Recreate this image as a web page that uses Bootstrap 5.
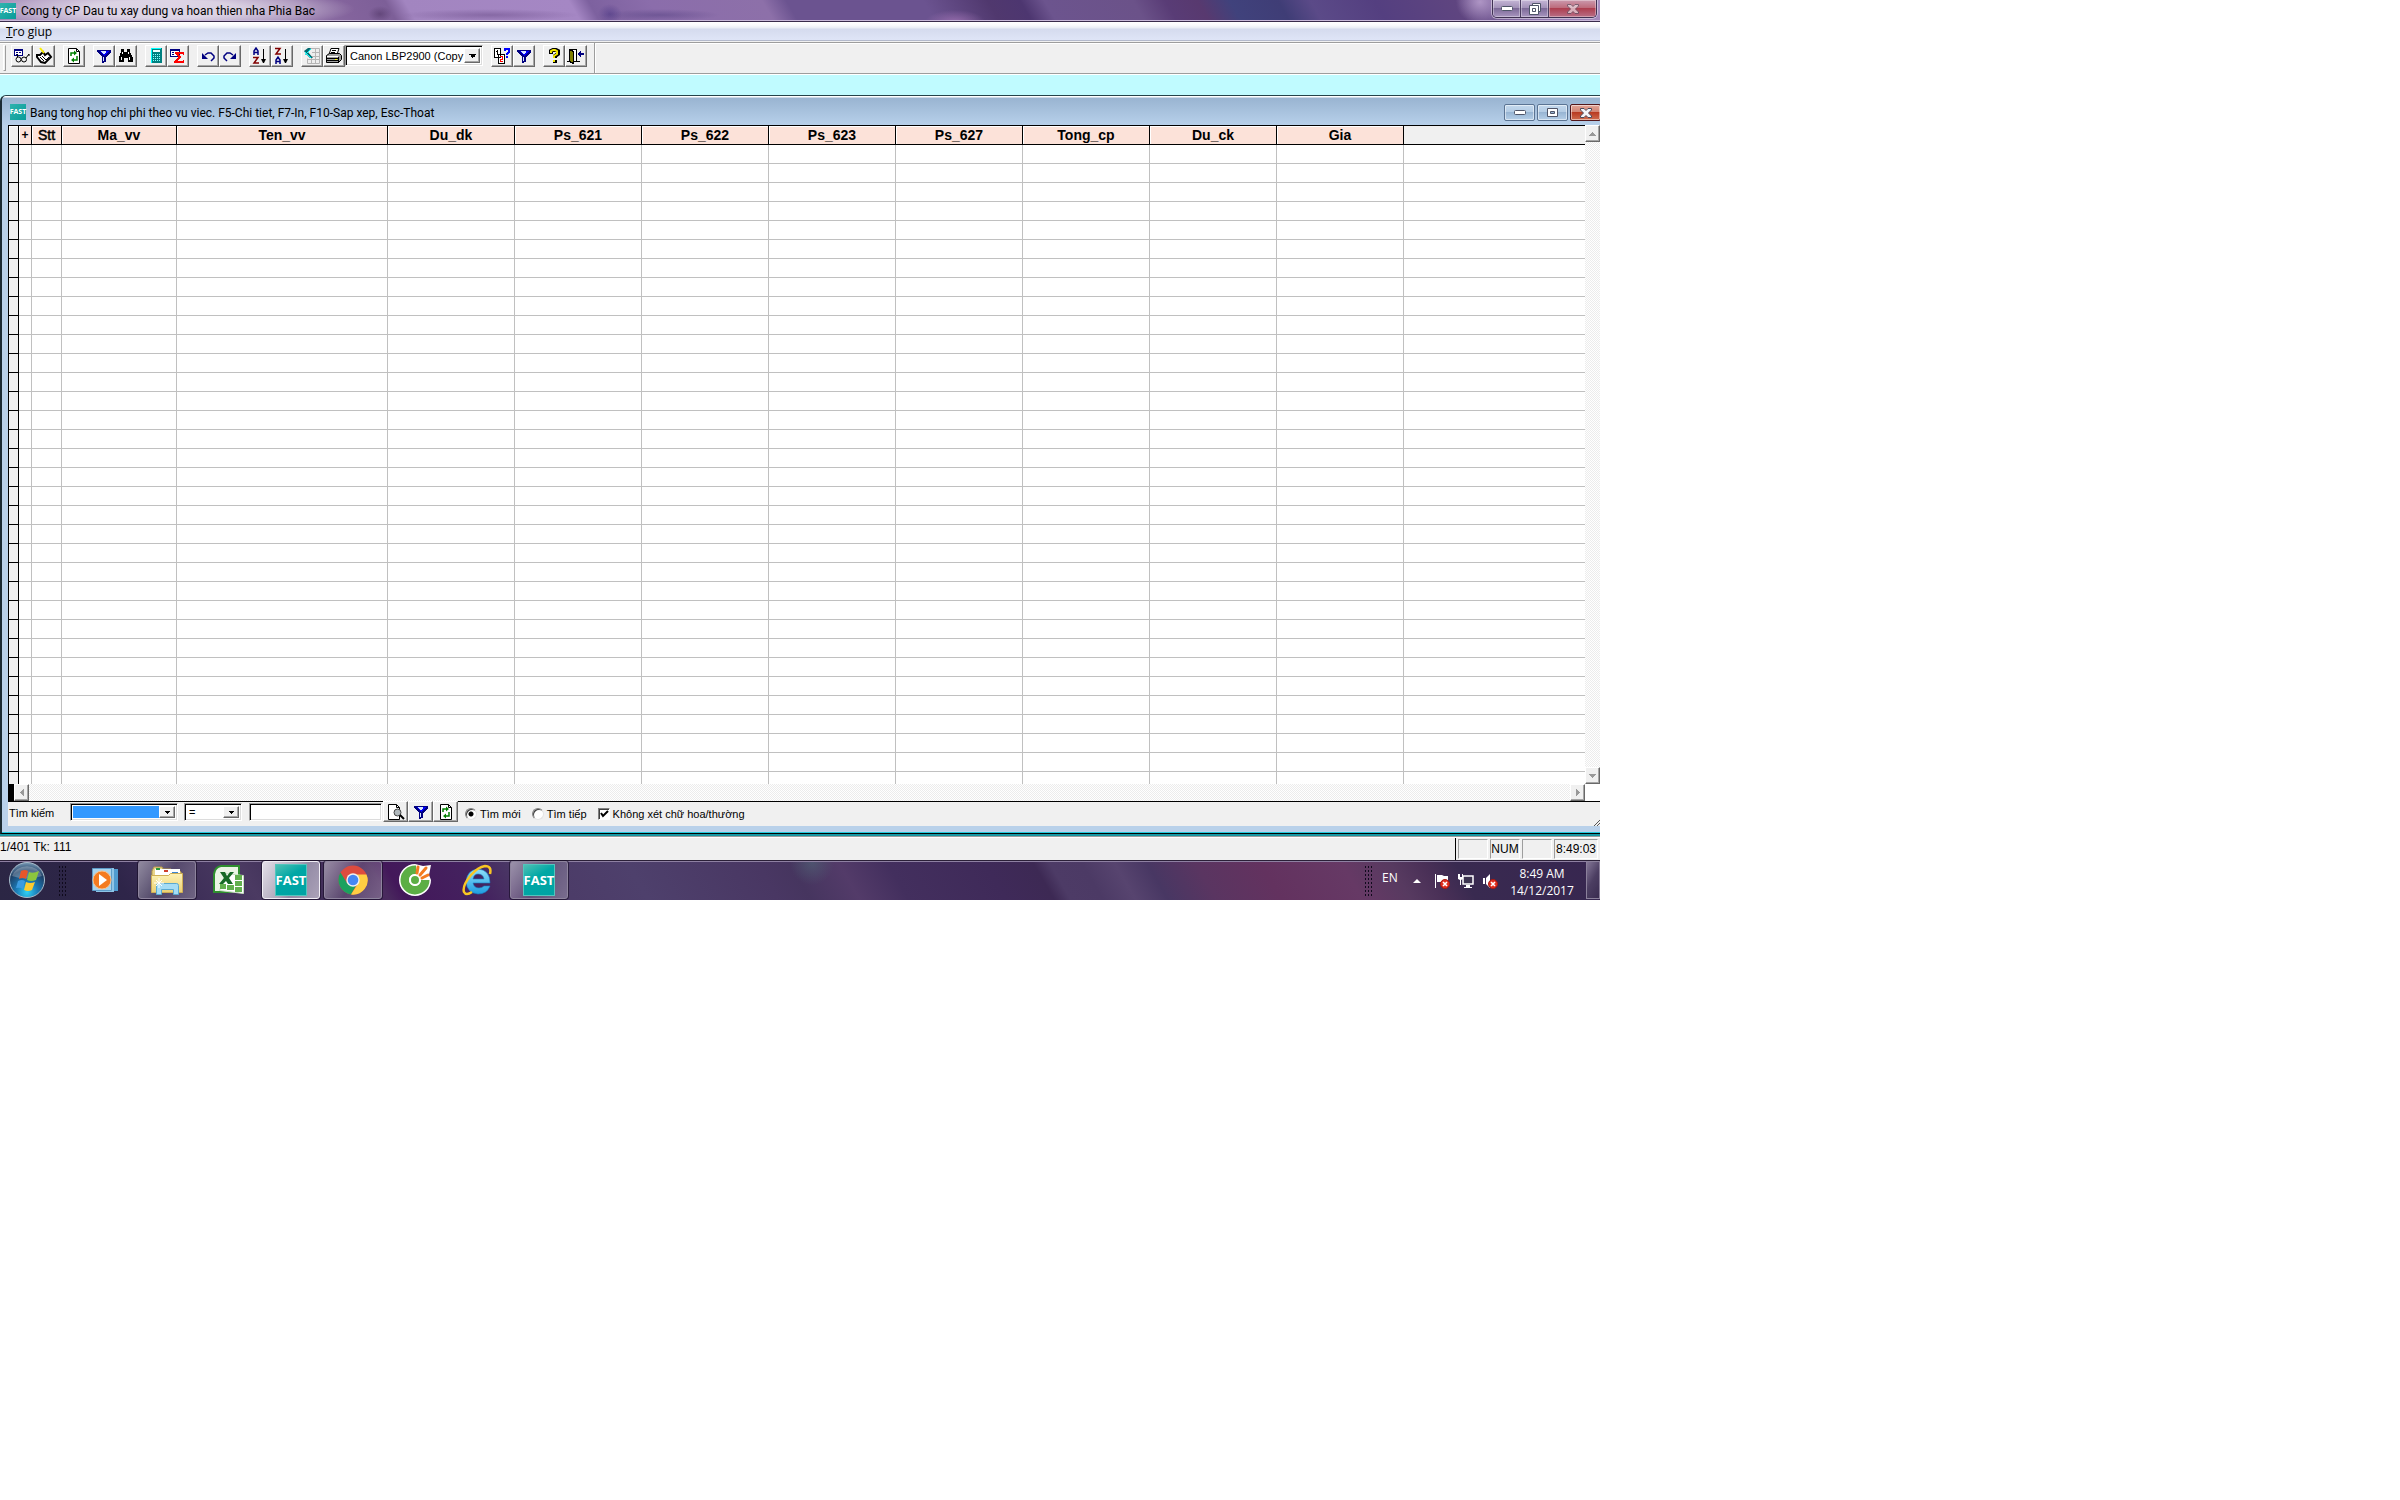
<!DOCTYPE html>
<html lang="vi">
<head>
<meta charset="utf-8">
<meta name="viewport" content="width=device-width, initial-scale=1">
<title>Cong ty CP Dau tu xay dung va hoan thien nha Phia Bac</title>
<link href="https://cdn.jsdelivr.net/npm/bootstrap@5.3.0/dist/css/bootstrap.min.css" rel="stylesheet">
<style>
  :root { --face:#f0f0f0; --frame:#b9d1ea; }
  body { background:#fff; color:#000; font-family:"Liberation Sans",Arial,sans-serif; font-size:12px; line-height:16px; }
  button, input, select { font:inherit; color:inherit; border-radius:0; padding:0; margin:0; }
  svg { display:block; flex:none; }
  .pix { shape-rendering:crispEdges; }
  .desktop { max-width:1600px; overflow:hidden; }
  .segoe { font-family:"Open Sans","Noto Sans",sans-serif; font-size:12px; }
  .caption-font { font-family:Roboto,"Open Sans",sans-serif; font-size:12px; }

  /* application title bar */
  .app-title { height:22px; border-bottom:1px solid #3a2c4c; box-shadow:inset 0 -1px #c9b9d9;
    background:
      radial-gradient(ellipse 190px 22px at 165px 9px, rgba(255,255,255,.62) 40%, rgba(255,255,255,.3) 75%, transparent),
      radial-gradient(ellipse 90px 6px at 490px 15px, rgba(80,50,110,.35), transparent),
      radial-gradient(ellipse 60px 6px at 660px 15px, rgba(60,45,110,.35), transparent),
      radial-gradient(ellipse 12px 10px at 610px 14px, rgba(70,50,130,.5), transparent),
      radial-gradient(ellipse 12px 8px at 380px 14px, rgba(60,35,80,.4), transparent),
      radial-gradient(ellipse 30px 12px at 955px 22px, rgba(160,115,180,.8), transparent),
      radial-gradient(ellipse 24px 22px at 1480px 2px, rgba(190,165,210,.8), transparent),
      linear-gradient(60deg,#9f86b4 0,#a68fbc 12%,#83639c 22%,#7d5f98 24.6%,#a285c0 25.8%,#a587c4 36%,#7d619f 37.2%,#8b6dab 41%,#8d70a9 48%,#6b5390 49.5%,#6b5390 58%,#50386e 62%,#4d3670 64%,#6c548e 65.5%,#6b5289 71%,#593c76 73%,#58396f 75%,#40427c 77%,#3f3d76 80%,#5b4a88 82%,#543f80 86%,#5f4580 91%,#8e74ac 95%,#a78fc0 100%); }
  .app-title .fast-tag { margin-top:3px; }
  .app-name { line-height:22px; margin-left:5px; }
  .fast-tag { background:linear-gradient(135deg,#2fb3ae,#089c99); color:#fff; font-family:"Open Sans",sans-serif; font-weight:700; display:inline-flex; align-items:center; justify-content:center; flex:none; }
  .fast-tag.s16 { width:16px; height:16px; font-size:7px; line-height:16px; }
  .fast-tag.s32 { width:32px; height:32px; font-size:13px; line-height:32px; background:linear-gradient(150deg,#4fc0b4,#00a7a5 40%,#00a3a4); border:1px solid #53c5bd; }
  .caption-set { align-self:flex-start; border:1px solid #3f3152; border-top:0; border-radius:0 0 5px 5px; box-shadow:0 0 0 1px rgba(255,255,255,.45); overflow:hidden; margin-right:3px; }
  .caption-set button { width:28px; height:17px; border:0; border-right:1px solid #4b3d60; background:linear-gradient(#c5b6d6,#a392b9 45%,#7d6a98 50%,#a895bf); display:flex; align-items:center; justify-content:center; box-shadow:inset 0 0 0 1px rgba(255,255,255,.35); }
  .caption-set button:last-child { width:47px; border-right:0; background:linear-gradient(#cb9aae,#bd6c7c 45%,#ad3f50 50%,#b86e86); }

  /* menu and toolbar */
  .menu-strip { height:20px; padding:0 6px; background:linear-gradient(#fff 0,#fbfbfd 3px,#e9edf5 6px,#d5dbee 7px,#dfe5f7 18px,#b3b9cb 18px,#b3b9cb 19px,var(--face) 19px); }
  .menu-strip a { color:#000; text-decoration:none; line-height:20px; }
  .tool-strip { height:32px; background:var(--face); border-top:1px solid #9d9d9d; border-bottom:1px solid #9d9d9d; box-shadow:inset 0 1px #fff; }
  .tool-box { padding:2px 7px 0 3px; border-right:1px solid #9d9d9d; box-shadow:inset 0 1px #fff, 1px 0 #fff; gap:8px; align-items:flex-start; }
  .tool-grip { width:3px; height:26px; border:1px solid; border-color:#fff #9d9d9d #9d9d9d #fff; margin-right:-3px; }
  .tool-btn { width:22px; height:22px; background:#f0f0f0; border:1px solid; border-color:#fff #696969 #696969 #fff; box-shadow:inset -1px -1px #a6a6a6; display:flex; align-items:center; justify-content:center; }
  .sunken { background:#fff; border:1px solid; border-color:#9d9d9d #fff #fff #9d9d9d; box-shadow:inset 1px 1px #000,inset -1px -1px #dcdcdc; }
  .combo { position:relative; display:flex; font-size:11px; }
  .combo select { width:100%; height:100%; appearance:none; border:0; background:transparent; padding:0 18px 0 4px; outline:0; }
  .combo .drop { position:absolute; right:2px; top:2px; bottom:2px; width:16px; background:#f0f0f0; border:1px solid; border-color:#fff #696969 #696969 #fff; box-shadow:inset -1px -1px #a6a6a6; display:flex; align-items:center; justify-content:center; pointer-events:none; }
  .combo-printer { width:138px; height:21px; }

  /* child window */
  .mdi { background:#c0fbff; padding-top:20px; border-top:1px solid #fff; }
  .child { background:var(--frame); border-left:2px solid #1c2b33; border-top:1px solid #24434a; border-top-left-radius:6px; border-bottom:1px solid #000; box-shadow:inset 0 1px #fff, inset 0 -1px #23c9dd; padding:0 0 7px 6px; }
  .child-title { height:29px; margin-left:-6px; padding:8px 0 0 8px; background:linear-gradient(#fff 0,#fff 1px,#99b4d1 2px,#b7d0ea); border-top-left-radius:5px; }
  .child-name { line-height:18px; margin-left:4px; }
  .child-caps { gap:2px; }
  .child-title button { width:31px; height:17px; border:1px solid #5b7493; border-radius:2px; background:linear-gradient(#c4d9ee,#b4cce4 45%,#98b5d3 50%,#b5cfe8); box-shadow:inset 0 0 0 1px rgba(255,255,255,.5); display:flex; align-items:center; justify-content:center; }
  .child-title button.x-btn { border-color:#52171b; background:linear-gradient(#e3a497,#d28573 45%,#b93b22 50%,#cf6c4e); margin-right:-1px; }
  .cost-grid { table-layout:fixed; border-collapse:separate; border-spacing:0; width:100%; background:#fff; border-top:1px solid #000; }
  .cost-grid th, .cost-grid td { padding:0; border-right:1px solid #c0c0c0; border-bottom:1px solid #c0c0c0; height:19px; }
  .cost-grid th { background:#fce2d9; border-color:#000; box-shadow:inset 1px 1px #fff; font-size:14px; line-height:18px; text-align:center; overflow:hidden; }
  .cost-grid th:nth-child(2) { font-size:12px; }
  .cost-grid th:nth-child(3) { font-weight:400; -webkit-text-stroke:.5px #000; }
  .cost-grid tr > :first-child { background:var(--face); border-color:#000; border-left:1px solid #000; }
  .cost-grid th:last-child { background:var(--face); box-shadow:none; }
  .cost-grid tr > :last-child { border-right:0; }
  .cost-grid tr.cut td { height:12px; border-bottom:0; }
  .track { background:repeating-conic-gradient(#fff 0 25%,#ececec 0 50%) 0 0/2px 2px; }
  .vbar { width:15px; }
  .hbar { height:17px; }
  .hbar .corner-l { width:6px; }
  .hbar .corner-r { width:15px; }
  .arrow { width:15px; height:17px; background:#f0f0f0; border:1px solid; border-color:#fff #696969 #696969 #fff; box-shadow:inset -1px -1px #a6a6a6; display:flex; align-items:center; justify-content:center; }
  .find-strip { background:var(--face); border-top:1px solid #000; height:25px; align-items:flex-start; padding-left:1px; font-size:11px; }
  .find-strip label { line-height:16px; }
  .find-strip .find-label { width:61px; margin-top:3px; }
  .find-field { width:108px; height:18px; margin:1px 6px 0 0; }
  .combo.find-field select { background:#3399ff; background-clip:content-box; padding:2px 18px 2px 2px; }
  .find-op { width:58px; height:18px; margin:1px 7px 0 0; }
  .find-text { width:133px; height:18px; margin:1px 1px 0 0; padding:0 4px; }
  .find-btn { width:25px; height:21px; margin-top:-1px; }
  .choice { display:flex; align-items:center; gap:3px; margin:4px 11px 0 0; }
  .choice.first { margin-left:7px; }
  .old-radio { appearance:none; width:12px; height:12px; border-radius:50%; background:#fff; border:1px solid; border-color:#808080 #e3e3e3 #e3e3e3 #808080; box-shadow:inset 1px 1px #404040; flex:none; }
  .old-radio:checked { background:radial-gradient(circle,#000 2px,#fff 3px); }
  .old-check { appearance:none; width:12px; height:12px; background:#fff; border:1px solid; border-color:#808080 #fff #fff #808080; box-shadow:inset 1px 1px #404040; flex:none; }
  .old-check:checked { background:#fff url("data:image/svg+xml,%3Csvg xmlns='http://www.w3.org/2000/svg' viewBox='0 0 10 10'%3E%3Cpath fill='none' stroke='%23000' stroke-width='2' d='M2 4l2 3 5-5'/%3E%3C/svg%3E"); }
  .teal-gap { height:4px; background:linear-gradient(#1797a3 0 2px,#9d9d9d 2px 3px,#fff 3px); }

  /* status bar */
  .status-strip { height:22px; background:var(--face); padding:1px 2px 0 0; gap:2px; }
  .status-strip .cell-box { width:30px; height:20px; border:1px solid; border-color:#9d9d9d #fff #fff #9d9d9d; text-align:center; line-height:18px; }
  .status-strip .cell-box.time { width:44px; }
  .status-rule { width:1px; height:22px; background:#000; margin-top:-1px; }

  /* taskbar */
  .taskbar { height:40px; border-top:1px solid #2b2038; box-shadow:inset 0 1px #8e80a2; color:#fff;
    background:
      radial-gradient(ellipse 22px 22px at 812px 2px,rgba(80,105,120,.55),transparent),
      linear-gradient(60deg,#2b2644 0,#2e2549 8%,#3a2c55 11%,#4b3a62 16%,#3f3058 19%,#4a2a5e 24%,#43185a 25%,#44225f 30%,#4b3a66 33%,#4e406c 40%,#493763 48%,#46355f 50%,#533b69 53%,#432f5e 56%,#3f2a59 62%,#3d2954 65%,#4d3b66 66%,#4c3a65 68%,#57446f 70%,#483763 72%,#5a3561 75%,#63325f 79%,#663965 84%,#573a60 87%,#4a3057 89%,#392a50 91%,#372650 100%); }
  .task-slot { width:58px; height:38px; border:1px solid transparent; border-radius:3px; background:transparent; display:flex; align-items:center; justify-content:center; }
  .task-slot.open { border-color:#8e849d; background:linear-gradient(120deg,rgba(255,255,255,.45),rgba(255,255,255,.12) 50%,rgba(255,255,255,.25)); box-shadow:0 0 0 1px rgba(20,10,35,.6); }
  .task-slot.front { background:linear-gradient(120deg,#e3dfe8,#b0a8bb 45%,#938aa5 60%,#aba2b8); border-color:#f1eef5; }
  .dots { width:8px; height:31px; background:radial-gradient(circle,#0f0a1c 1px,transparent 1px) 0 0/3px 4px; }
  .orb-btn { margin-left:8px; }
  .start-dots { margin:4px 10px 0 12px; }
  .tray-dots { margin:4px 10px 0 0; }
  .tray-lang { width:21px; margin-top:9px; }
  .tray-up { margin:18px 13px 0 10px; }
  .tray-icons { gap:8px; margin-top:12px; }
  .clock { width:88px; margin-top:4px; line-height:17px; text-align:center; }
  .peek { width:14px; height:38px; border:1px solid #8b809b; background:linear-gradient(120deg,#837696,#4c3e62 50%,#3a2c50); }
</style>
</head>
<body>
<svg width="0" height="0" class="position-absolute" aria-hidden="true">
  <defs>
    <symbol id="i-view" viewBox="0 0 18 18"><path fill="#000080" d="M1 2h9v7H1z"/><path fill="#fff" d="M2 4h7v4H2z"/><path fill="#000080" d="M3 5h2v1H3zM6 5h2v1H6zM3 7h2v1H3z"/><g fill="none" stroke="#000" stroke-width="1"><circle cx="5.500" cy="12.500" r="2.500"/><circle cx="11" cy="12.500" r="2.500"/><path d="M4.500 10V7M13 11l3-4v2"/></g></symbol>
    <symbol id="i-edit" viewBox="0 0 18 18"><path fill="#fff" stroke="#000" stroke-width="2" d="M2 8h3l3-3 2 3 3-2 3 4-6 6-4-1-4-5z"/><path stroke="#000" d="M5 10l4 4M7 9l4 4M11 13l3-3" fill="none"/><path stroke="#f8ee00" stroke-width="2" d="M5 1l4 5"/></symbol>
    <symbol id="i-refresh" viewBox="0 0 18 18"><path fill="#fff" stroke="#000" d="M3.500 1.500h8l3 3v12h-11z"/><path fill="none" stroke="#000" d="M11.500 1.500v3h3"/><path fill="none" stroke="#008000" stroke-width="1.500" d="M6 9V6h3M12 9v4H9"/><path fill="#008000" d="M9 3.500l3 2.500-3 2.500zM9 10.500v5l-3-2.500z"/></symbol>
    <symbol id="i-filter" viewBox="0 0 18 18"><path d="M2 3h14v2l-5 5v5l-4 1v-6L2 5z" fill="#000080"/><path fill="#00f" d="M4 4h10l-5 5z"/><path fill="#d8e8ff" d="M6 4h5v1l-2 3-2-2zM8 10h1v4H8z"/></symbol>
    <symbol id="i-find" viewBox="0 0 18 18"><path d="M4 2h3v3h3V2h3v3l3 6v4h-5v-4H7v4H2v-4l2-6z"/><path fill="#fff" d="M5 5h1v2H5zM11 5h1v2h-1zM4 10h1v3H4zM12 10h1v3h-1z"/></symbol>
    <symbol id="i-calc" viewBox="0 0 18 18"><path fill="#008080" d="M4 1h11v15H4z"/><path fill="#0ff" d="M4 1h10v1H5v14H4z"/><path fill="#eff" d="M6 3h7v2H6z"/><path fill="#8ff" d="M6 7h1v1H6zM8 7h1v1H8zM10 7h1v1h-1zM12 7h1v1h-1zM6 9h1v1H6zM8 9h1v1H8zM10 9h1v1h-1zM12 9h1v1h-1zM6 11h1v1H6zM8 11h1v1H8zM10 11h1v1h-1zM12 11h1v1h-1zM6 13h1v1H6zM8 13h1v1H8zM10 13h1v1h-1zM12 13h1v1h-1z"/></symbol>
    <symbol id="i-sum" viewBox="0 0 18 18"><path fill="#000080" d="M1 2h10v8H1z"/><path fill="#fff" d="M2 4h8v5H2z"/><path fill="#000080" d="M3 5h2v1H3zM6 5h3v1H6zM3 7h2v1H3z"/><path fill="#f00" d="M6 5h9v3h-1l-1-1H9l3 3-4 4h5l2-2v4H5v-2l4-4-3-3z"/></symbol>
    <symbol id="i-undo" viewBox="0 0 18 18"><path fill="none" stroke="#000080" stroke-width="1.500" d="M6 8l3-2h3l3 3v2l-3 3"/><path fill="#000080" d="M3 6v6h6z"/></symbol>
    <symbol id="i-redo" viewBox="0 0 18 18"><path fill="none" stroke="#000080" stroke-width="1.500" d="M12 8L9 6H6L3 9v2l3 3"/><path fill="#000080" d="M15 6v6H9z"/></symbol>
    <symbol id="i-excel" viewBox="0 0 18 18"><path fill="#eee" stroke="#b5b5b5" d="M7.500 1.500h9v15h-12v-5"/><path stroke="#b5b5b5" fill="none" d="M9 5.500h8M8 9.500h9M5 12.500h12M12.500 2v15M8.500 10v7"/><path fill="#006a70" d="M1 4l4-3h3L5 5l5 6H7L3 7z"/><path stroke="#0ff" d="M2 8l6-6M2 5l6 6" fill="none"/></symbol>
    <symbol id="i-print" viewBox="0 0 18 18"><path fill="#fff" stroke="#000" d="M6 1.500h8l-2 6H4z"/><path stroke="#000" d="M7 3.500h4M6 5.500h4" fill="none"/><path fill="#a0a0a0" stroke="#000" d="M1.500 8.500l3-2h10l2 2v4l-3 3h-12z"/><path fill="#fff" d="M2 9h11v1H2z"/><path fill="#ff0" d="M10 12h2v1h-2z"/><path stroke="#000" d="M2 11.500h11M2 13.500h11M13.500 10v6" fill="none"/></symbol>
    <symbol id="i-pages" viewBox="0 0 18 18"><path fill="#fff" stroke="#000" d="M1.500 1.500h6v9h-6zM5.500 7.500h6v9h-6z"/><path fill="#000" d="M4 3h1v5H4zM3 4h1v1H3z"/><path fill="none" stroke="red" d="M7 9.500h2.500V12H7.500v2.500H10"/><path fill="none" stroke="#00f" stroke-width="2" d="M12 4V2h4v3l-2 2v1M14 9v2"/></symbol>
    <symbol id="i-help" viewBox="0 0 18 18"><path fill="none" stroke="#000" stroke-width="4" d="M6 7V4l2-1h3l2 1v3l-3 2v2M10 13v3"/><path fill="none" stroke="#f2e600" stroke-width="2" d="M6 6V4l2-1h2l2 1v3l-3 2v2M9 13v2"/></symbol>
    <symbol id="i-exit" viewBox="0 0 18 18"><path fill="#fff" stroke="#000" d="M2.500 2.500h7v12h-7z"/><path fill="#808000" stroke="#000" d="M2.500 2.500l4 2v12l-4-2z"/><path stroke="#000" d="M0 14.500h3M9 14.500h4" fill="none"/><path fill="#000080" d="M10 7l4-3v2h3v2h-3v2z"/></symbol>
    <symbol id="i-preview" viewBox="0 0 18 18"><path fill="#fff" stroke="#000" d="M1.500 1.500h8l3 3v12h-11z"/><path fill="none" stroke="#000" d="M9.500 1.500v3h3"/><circle cx="10.500" cy="9.500" r="3.500" fill="#b0b8bc" stroke="#444"/><path stroke="#000" stroke-width="2" d="M13 12l4 4"/></symbol>
    <symbol id="i-tri" viewBox="0 0 5 3"><path d="M0 0h5v1H4v1H3v1H2V2H1V1H0z"/></symbol>
    <symbol id="i-min" viewBox="0 0 12 6"><rect x=".5" y=".5" width="11" height="4" rx="1" fill="#fff" stroke="#4f5568"/></symbol>
    <symbol id="i-max" viewBox="0 0 11 10"><path fill="#fff" fill-rule="evenodd" stroke="#4f5568" d="M.5.500h10v8H.5zM3.500 3.500h4v2h-4z"/></symbol>
    <symbol id="i-restore" viewBox="0 0 12 12"><path fill="#fff" stroke="#4f5568" d="M3.500.500h8v8h-8z"/><path fill="#fff" fill-rule="evenodd" stroke="#4f5568" d="M.5 2.500h9v9h-9zM3.500 5.500h3v3h-3z"/></symbol>
    <symbol id="i-x" viewBox="0 0 12 10"><path fill="#f4f4f8" stroke="#4b4a5c" d="M.5.500h3.500l2 2 2-2h3.500v1.500l-3 3 3 3v1.500H8l-2-2-2 2H.5V8l3-3-3-3z"/></symbol>
    <symbol id="i-bad" viewBox="0 0 10 10"><circle cx="5" cy="5" r="4.500" fill="#e03020" stroke="#a81810"/><path stroke="#fff" stroke-width="1.600" d="M3 3l4 4M7 3l-4 4"/></symbol>
    <radialGradient id="orb" cx=".5" cy=".85" r=".9"><stop offset="0" stop-color="#2fd0f5"/><stop offset=".35" stop-color="#1b79b5"/><stop offset=".7" stop-color="#1d3f66"/><stop offset="1" stop-color="#8fb0c8"/></radialGradient>
    <linearGradient id="fold" x1="0" y1="0" x2="0" y2="1"><stop offset="0" stop-color="#fdf3b8"/><stop offset="1" stop-color="#ecd073"/></linearGradient>
    <linearGradient id="ie" x1="0" y1="0" x2="0" y2="1"><stop offset="0" stop-color="#8fe0fb"/><stop offset="1" stop-color="#1e9be0"/></linearGradient>
  </defs>
</svg>

<main class="desktop">
  <header class="app-title d-flex align-items-start caption-font">
    <span class="fast-tag s16">FAST</span>
    <span class="app-name">Cong ty CP Dau tu xay dung va hoan thien nha Phia Bac</span>
    <div class="caption-set d-flex ms-auto">
      <button type="button" aria-label="Minimize"><svg width="12" height="6"><use href="#i-min"/></svg></button>
      <button type="button" aria-label="Restore"><svg width="12" height="12"><use href="#i-restore"/></svg></button>
      <button type="button" aria-label="Close"><svg width="12" height="10" opacity=".6"><use href="#i-x"/></svg></button>
    </div>
  </header>

  <nav class="menu-strip segoe d-flex"><a href="#"><u>T</u>ro giup</a></nav>

  <div class="tool-strip d-flex" role="toolbar">
    <div class="tool-box d-flex">
      <span class="tool-grip"></span>
      <div class="d-flex"><button class="tool-btn" aria-label="View"><svg width="18" height="18"><use href="#i-view"/></svg></button><button class="tool-btn" aria-label="Edit"><svg width="18" height="18"><use href="#i-edit"/></svg></button></div>
      <button class="tool-btn" aria-label="Refresh"><svg width="18" height="18"><use href="#i-refresh"/></svg></button>
      <div class="d-flex"><button class="tool-btn" aria-label="Filter"><svg class="pix" width="18" height="18"><use href="#i-filter"/></svg></button><button class="tool-btn" aria-label="Find"><svg class="pix" width="18" height="18"><use href="#i-find"/></svg></button></div>
      <div class="d-flex"><button class="tool-btn" aria-label="Calculator"><svg class="pix" width="18" height="18"><use href="#i-calc"/></svg></button><button class="tool-btn" aria-label="Sum"><svg class="pix" width="18" height="18"><use href="#i-sum"/></svg></button></div>
      <div class="d-flex"><button class="tool-btn" aria-label="Undo"><svg width="18" height="18"><use href="#i-undo"/></svg></button><button class="tool-btn" aria-label="Redo"><svg width="18" height="18"><use href="#i-redo"/></svg></button></div>
      <div class="d-flex">
        <button class="tool-btn" aria-label="Sort ascending"><svg width="18" height="18" viewBox="0 0 18 18"><path fill="none" stroke="#000080" stroke-width="1.500" d="M3 8V4l2-3 2 3v4M3 5.500h4"/><path fill="none" stroke="#800000" stroke-width="1.500" d="M2 10.500h5L3 16h5"/><path d="M12 2h1v10h2l-2 4h-1l-2-4h2z"/></svg></button>
        <button class="tool-btn" aria-label="Sort descending"><svg width="18" height="18" viewBox="0 0 18 18"><path fill="none" stroke="#800000" stroke-width="1.500" d="M2 1.500h5L3 7h5"/><path fill="none" stroke="#000080" stroke-width="1.500" d="M3 17v-4l2-3 2 3v4M3 14.500h4"/><path d="M12 2h1v10h2l-2 4h-1l-2-4h2z"/></svg></button>
      </div>
      <div class="d-flex">
        <button class="tool-btn" aria-label="Excel"><svg width="18" height="18"><use href="#i-excel"/></svg></button><button class="tool-btn" aria-label="Print"><svg width="18" height="18"><use href="#i-print"/></svg></button>
        <div class="combo combo-printer sunken"><select aria-label="Printer"><option>Canon LBP2900 (Copy 1)</option></select><span class="drop"><svg class="pix" width="7" height="4"><use href="#i-tri"/></svg></span></div>
      </div>
      <div class="d-flex"><button class="tool-btn" aria-label="Pages"><svg class="pix" width="18" height="18"><use href="#i-pages"/></svg></button><button class="tool-btn" aria-label="Filter pages"><svg class="pix" width="18" height="18"><use href="#i-filter"/></svg></button></div>
      <div class="d-flex"><button class="tool-btn" aria-label="Help"><svg width="18" height="18"><use href="#i-help"/></svg></button><button class="tool-btn" aria-label="Exit"><svg class="pix" width="18" height="18"><use href="#i-exit"/></svg></button></div>
    </div>
  </div>

  <section class="mdi">
    <div class="child">
      <div class="child-title d-flex align-items-start caption-font">
        <span class="fast-tag s16">FAST</span>
        <span class="child-name">Bang tong hop chi phi theo vu viec. F5-Chi tiet, F7-In, F10-Sap xep, Esc-Thoat</span>
        <div class="child-caps d-flex ms-auto">
          <button type="button" aria-label="Minimize"><svg width="12" height="6"><use href="#i-min"/></svg></button>
          <button type="button" aria-label="Maximize"><svg width="11" height="10"><use href="#i-max"/></svg></button>
          <button type="button" class="x-btn" aria-label="Close"><svg width="12" height="10"><use href="#i-x"/></svg></button>
        </div>
      </div>

      <div class="d-flex">
        <table class="cost-grid">
          <colgroup><col width="11"><col width="13"><col width="30"><col width="115"><col width="211"><col width="127" span="8"><col></colgroup>
          <thead><tr><th></th><th>+</th><th>Stt</th><th>Ma_vv</th><th>Ten_vv</th><th>Du_dk</th><th>Ps_621</th><th>Ps_622</th><th>Ps_623</th><th>Ps_627</th><th>Tong_cp</th><th>Du_ck</th><th>Gia</th><th></th></tr></thead>
          <tbody id="rows"></tbody>
        </table>
        <div class="vbar track d-flex flex-column justify-content-between flex-shrink-0">
          <button class="arrow" aria-label="Scroll up"><svg class="pix" width="7" height="4" viewBox="0 0 7 4"><path fill="#999" d="M3 0h1v1h1v1h1v1h1v1H0V3h1V2h1V1h1z"/></svg></button>
          <button class="arrow" aria-label="Scroll down"><svg class="pix" width="7" height="4" viewBox="0 0 7 4"><path fill="#999" d="M0 0h7v1H6v1H5v1H4v1H3V3H2V2H1V1H0z"/></svg></button>
        </div>
      </div>
      <div class="hbar track d-flex">
        <span class="corner-l bg-black"></span>
        <button class="arrow" aria-label="Scroll left"><svg class="pix" width="4" height="7" viewBox="0 0 4 7"><path fill="#999" d="M4 0v7H3V6H2V5H1V4H0V3h1V2h1V1h1V0z"/></svg></button>
        <button class="arrow ms-auto" aria-label="Scroll right"><svg class="pix" width="4" height="7" viewBox="0 0 4 7"><path fill="#999" d="M0 0v7h1V6h1V5h1V4h1V3H3V2H2V1H1V0z"/></svg></button>
        <span class="corner-r bg-white"></span>
      </div>

      <form class="find-strip d-flex">
        <label for="field" class="find-label">Tìm kiếm</label>
        <div class="combo sunken find-field"><select id="field"><option></option></select><span class="drop"><svg class="pix" width="5" height="3"><use href="#i-tri"/></svg></span></div>
        <div class="combo sunken find-op"><select aria-label="Phép so sánh"><option>=</option></select><span class="drop"><svg class="pix" width="5" height="3"><use href="#i-tri"/></svg></span></div>
        <input type="text" class="sunken find-text" aria-label="Giá trị">
        <button type="button" class="tool-btn find-btn" aria-label="Xem"><svg width="18" height="18"><use href="#i-preview"/></svg></button>
        <button type="button" class="tool-btn find-btn" aria-label="Lọc"><svg class="pix" width="18" height="18"><use href="#i-filter"/></svg></button>
        <button type="button" class="tool-btn find-btn" aria-label="Làm lại"><svg width="18" height="18"><use href="#i-refresh"/></svg></button>
        <div class="choice first"><input class="old-radio" type="radio" name="mode" id="m1" checked><label for="m1">Tìm mới</label></div>
        <div class="choice"><input class="old-radio" type="radio" name="mode" id="m2"><label for="m2">Tìm tiếp</label></div>
        <div class="choice"><input class="old-check" type="checkbox" id="cs" checked><label for="cs">Không xét chữ hoa/thường</label></div>
        <svg class="ms-auto align-self-end" width="6" height="6"><path stroke="#555" d="M0 6l6-6M3 6l3-3"/></svg>
      </form>
    </div>
  </section>
  <div class="teal-gap"></div>

  <footer class="status-strip d-flex">
    <span class="me-auto">1/401 Tk: 111</span>
    <span class="status-rule"></span>
    <span class="cell-box"></span>
    <span class="cell-box">NUM</span>
    <span class="cell-box"></span>
    <span class="cell-box time">8:49:03</span>
  </footer>

  <nav class="taskbar d-flex align-items-start segoe">
    <button class="orb-btn border-0 bg-transparent" aria-label="Start"><svg width="38" height="38" viewBox="0 0 38 38"><circle cx="19" cy="19" r="17.500" fill="url(#orb)" stroke="#a9bccb"/><path fill="#fff" opacity=".25" d="M4 15a15.500 13 0 0130 0q-15 5-30 0z"/><path fill="#e8562a" d="M13 10q4-2 7 0l-2 8q-3-2-7 0z"/><path fill="#8cc63e" d="M21 11q4 2 10-1l-3 9q-5 2-9 0z"/><path fill="#3c9be0" d="M10 20q4-2 7 0l-2 8q-3-2-7-1z"/><path fill="#fccb2f" d="M18 21q4 2 9 0l-3 8q-4 2-8 0z"/></svg></button>
    <span class="dots start-dots"></span>
    <div class="d-flex gap-1">
      <button class="task-slot" aria-label="Media Player"><svg width="28" height="28" viewBox="0 0 28 28"><path fill="#4f9bd0" d="M8 3h19v22H8z"/><path fill="#8fc4e6" d="M5 2h18v24H5z"/><path fill="#a8d4ee" stroke="#5d9cc8" d="M1.500 2.500h19v22h-19z"/><circle cx="11" cy="14" r="9" fill="#f47b20" stroke="#fbc08a"/><path fill="#fff" d="M8 8l8 6-8 6z"/></svg></button>
      <button class="task-slot open" aria-label="Explorer"><svg width="34" height="32" viewBox="0 0 34 32"><path fill="#e9d48a" stroke="#b79b4a" d="M3 5l1-2h8l1 2h8l1 2h8l2 3v18H2V7z"/><path fill="#fff" d="M5 5h25v6H5z"/><path fill="#2a9a3c" d="M6 4h4v2H6z"/><path fill="#d0402c" d="M14 6h4v2h-4z"/><path fill="#3a86d0" d="M22 8h6v2h-6z"/><path fill="url(#fold)" stroke="#cfae54" d="M1.500 11.500h17l2-2h12v19h-31z"/><path fill="#a5dcf5" stroke="#5aa9d0" d="M6.500 30.500v-9q0-2 2-2h18q2 0 2 2v9h-5v-5h-12v5z"/><path stroke="#fff" d="M9 14v10M4 19h10M6 16l6 6M12 16l-6 6"/></svg></button>
      <button class="task-slot" aria-label="Excel"><svg width="32" height="30" viewBox="0 0 32 30"><path fill="#eaf5e4" stroke="#2f8f2f" stroke-width="2" d="M8 1h18v22l-8 4H1V9q1-7 7-8z"/><path fill="#fff" stroke="#c6dfc0" d="M12.500 8.500l18 2v18l-24-3z"/><path fill="#62b04e" d="M22 10h7v5h-7zM22 16h7v5h-7zM22 22h7v5h-7zM14 20h7v5h-7zM7 19h6v5H7z"/><path fill="#176a26" d="M7 7h5l2 4 3-4h4l-5 6 4 6h-5l-2-3-3 3H6l5-6z"/></svg></button>
      <button class="task-slot open front" aria-label="FAST Accounting"><span class="fast-tag s32">FAST</span></button>
      <button class="task-slot open" aria-label="Chrome"><svg width="30" height="30" viewBox="0 0 30 30"><circle cx="15" cy="15" r="14.500" fill="#dd4b3e"/><path fill="#1aa15f" d="M2.500 7.500A14.500 14.500 0 0013 29.400L19.500 18 9 18z"/><path fill="#ffce43" d="M28.500 9.500H15l5 9-7 11A14.500 14.500 0 0028.500 9.500z"/><circle cx="15" cy="15" r="6.700" fill="#f1f1f1"/><circle cx="15" cy="15" r="5.300" fill="#4587f4"/></svg></button>
      <button class="task-slot" aria-label="Coc Coc"><svg width="32" height="32" viewBox="0 0 32 32"><path fill="#fff" d="M16 0a16 16 0 1016 16l-2-5 2-10-8 1z"/><path fill="#5cae45" d="M17 1.500A14.500 14.500 0 1030.500 16H22a6 6 0 11-5-6z"/><circle cx="16" cy="16" r="5" fill="#5cae45" stroke="#fff" stroke-width="2"/><path stroke="#f47b20" stroke-width="3" stroke-linecap="round" d="M18 9l1-6M21 11l6-7M23 14l6-3"/></svg></button>
      <button class="task-slot" aria-label="Internet Explorer"><svg width="32" height="32" viewBox="0 0 32 32"><path fill="url(#ie)" stroke="#1580c4" stroke-width=".6" d="M29 19H12q1 5 6 5 3 0 5-2h6q-3 8-12 8-11-1-12-12Q6 6 17 5q12 1 12 14zm-6-4q-1-5-6-5-4 0-5 5z"/><path fill="none" stroke="#f9c623" stroke-width="2.500" d="M29 10q2-8-5-8-7 1-14 9-9 11-7 17 2 4 8 0"/></svg></button>
      <button class="task-slot open" aria-label="FAST"><span class="fast-tag s32">FAST</span></button>
    </div>
    <div class="d-flex ms-auto">
      <span class="dots tray-dots"></span>
      <span class="tray-lang">EN</span>
      <svg class="tray-up" width="8" height="4" viewBox="0 0 8 4"><path fill="#fff" d="M0 4l4-4 4 4z"/></svg>
      <div class="d-flex tray-icons">
        <svg width="16" height="16" viewBox="0 0 16 16"><path fill="#fff" d="M1 1h1v14H1zM3 2h5l2 1h4v7H8L7 9H3z"/><svg x="6" y="6" width="10" height="10"><use href="#i-bad"/></svg></svg>
        <svg width="16" height="16" viewBox="0 0 16 16"><path fill="#3c3350" stroke="#fff" stroke-width="1.500" d="M5 3h10v8H5z"/><path fill="#fff" d="M8 12h4v2H8zM6 14h8v1H6zM1 1h1v3h2V1h1v5L3 7v5H2V7L0 6V1z"/></svg>
        <svg width="16" height="16" viewBox="0 0 16 16"><path fill="#fff" d="M1 5h2v6H1zM4 5l4-4v14l-4-4z"/><svg x="6" y="6" width="10" height="10"><use href="#i-bad"/></svg></svg>
      </div>
      <div class="clock">8:49 AM<br>14/12/2017</div>
      <button class="peek" aria-label="Show desktop"></button>
    </div>
  </nav>
</main>

<script src="https://cdn.jsdelivr.net/npm/bootstrap@5.3.0/dist/js/bootstrap.bundle.min.js"></script>
<script>
  const cells = '<td></td>'.repeat(14);
  document.getElementById('rows').innerHTML = ('<tr>' + cells + '</tr>').repeat(33) + '<tr class="cut">' + cells + '</tr>';
</script>
</body>
</html>
